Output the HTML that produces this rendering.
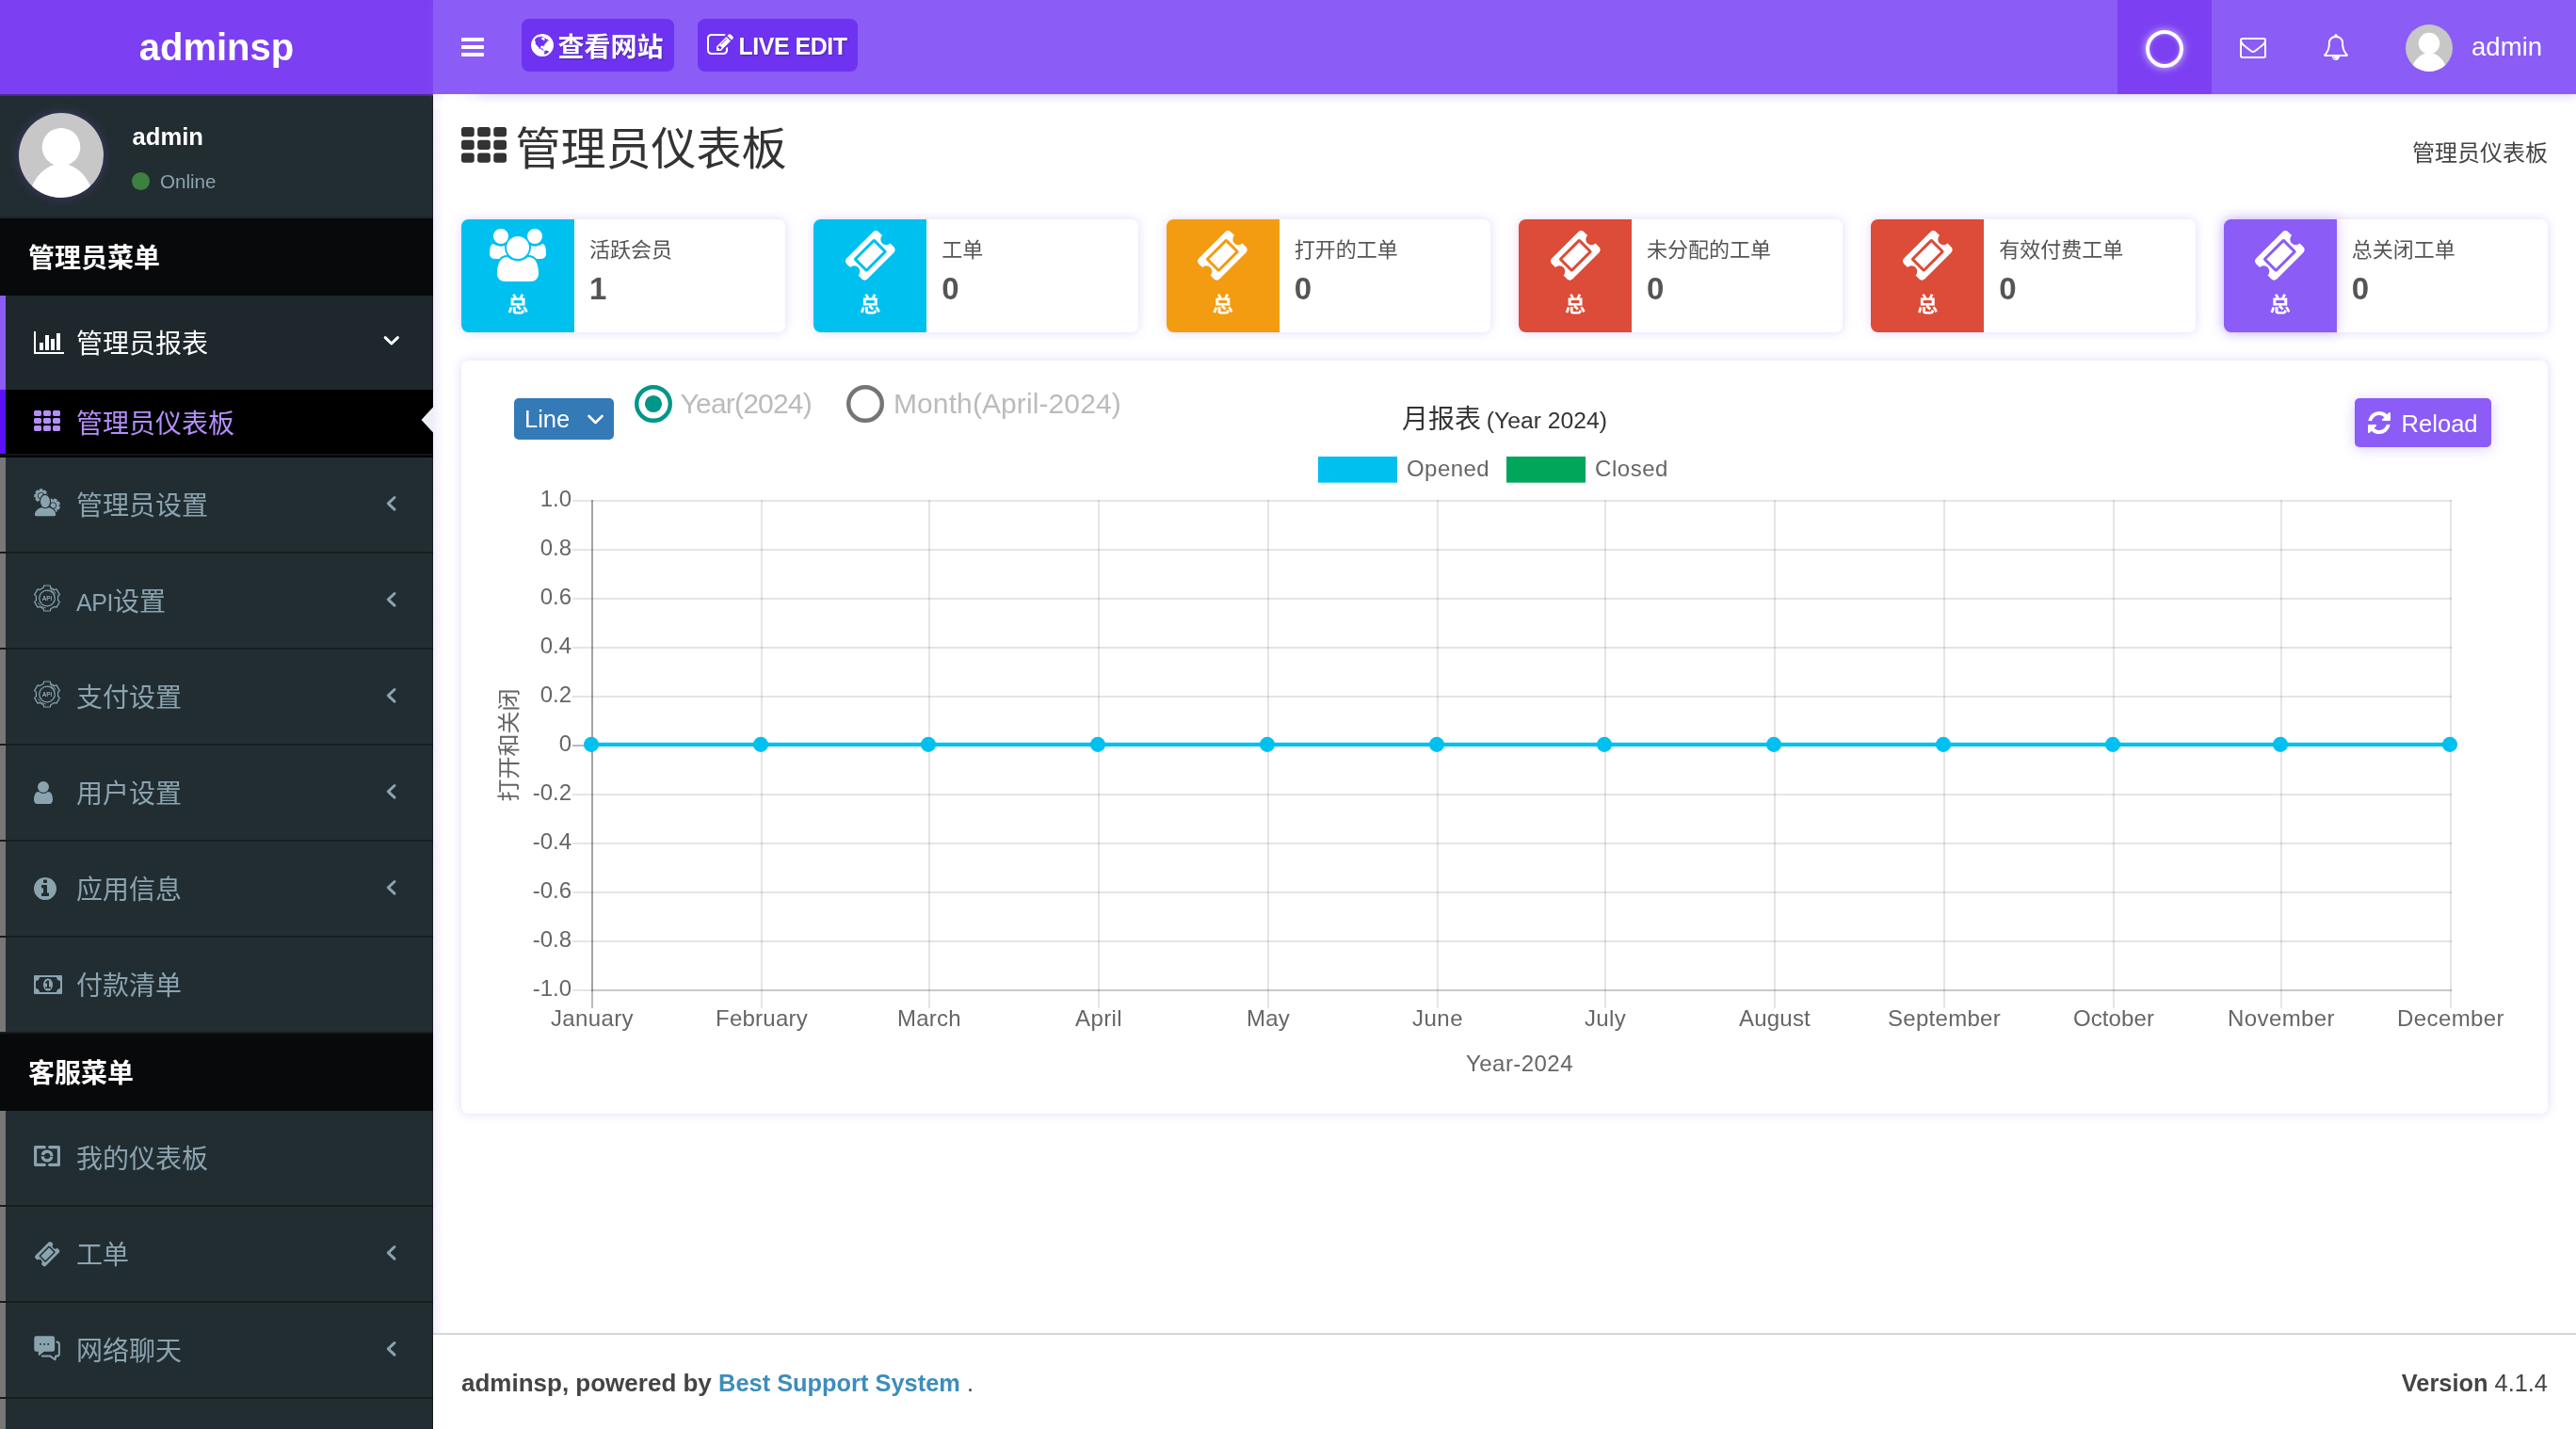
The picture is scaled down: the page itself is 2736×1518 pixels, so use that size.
<!DOCTYPE html>
<html lang="zh-CN">
<head>
<meta charset="utf-8">
<title>管理员仪表板 - adminsp</title>
<style>
*{box-sizing:border-box;margin:0;padding:0}
html,body{width:2736px;height:1518px;overflow:hidden;background:#fff}
body{position:relative;font-family:"Liberation Sans","Noto Sans CJK SC",sans-serif;color:#333;font-size:28px;line-height:40px}
#side,#hdr,#main{will-change:transform}
.ic{position:absolute;display:block;overflow:visible}
.abs{position:absolute;white-space:nowrap}
b,strong{font-weight:700}

/* ---------- sidebar ---------- */
#side{position:absolute;left:0;top:0;width:460px;height:1518px;background:#222d32;overflow:hidden}
#sedge{position:absolute;left:459px;top:102px;width:1px;height:1416px;background:rgba(0,0,0,.35)}
#logo{position:absolute;left:0;top:0;width:460px;height:100px;background:#7c40f2;color:#fff;text-align:center;
  font:700 40px/100px "Liberation Sans",sans-serif}
#logoshade{position:absolute;left:0;top:100px;width:460px;height:2px;background:#4a289c}
#upanel{position:absolute;left:0;top:100px;width:460px;height:132px;border-bottom:2px solid #1b2428}
.avatar{position:absolute;border-radius:50%;background:#c7c7c7;overflow:hidden}
.av1{box-shadow:0 0 12px rgba(139,92,246,.3)}
.uname{position:absolute;left:140.6px;top:130px;color:#fff;font-weight:700;font-size:25.6px;line-height:30px;white-space:nowrap}
.ustat{position:absolute;left:170px;top:181px;color:#8aa4af;font-size:20.6px;line-height:24px;white-space:nowrap}
.udot{position:absolute;left:140px;top:183px;width:19px;height:19px;border-radius:50%;background:#3e8040}
.mh{position:absolute;left:0;width:460px;height:82px;background:#08090b;color:#fff;font-weight:700;font-size:28px;line-height:82px;padding-left:30px;padding-top:2px;white-space:nowrap}
.mi{position:absolute;left:0;width:460px;height:102px;border-bottom:2px solid #161d21;color:#8aa4af;
  font-size:28px;line-height:100px;white-space:nowrap;background:linear-gradient(to right,#777 0,#777 6px,rgba(0,0,0,0) 6px)}
.mi .t{position:absolute;left:81px;top:2px}
.mi.act{background:linear-gradient(to right,#8b5cf6 0,#8b5cf6 6px,#1e282c 6px);color:#fff;height:100px;border-bottom:0}
.sub{position:absolute;left:0;top:414px;width:460px;height:68px;background:linear-gradient(to right,#5b10f5 0,#5b10f5 6px,#000 6px);color:#b48ef9;font-size:28px;line-height:70px;white-space:nowrap}
.sub .t{position:absolute;left:81px;top:2px}
.subline{position:absolute;left:0;top:482px;width:460px;height:4px;background:linear-gradient(to bottom,#101615 0,#101615 2px,#000 2px)}
.chev{position:absolute;display:block;overflow:visible}

/* ---------- header ---------- */
#hdr{z-index:5;position:absolute;left:460px;top:0;width:2276px;height:100px;background:#8b5cf6;box-shadow:0 2px 10px rgba(139,92,246,.3)}
.hbtn{position:absolute;top:20px;height:56px;border-radius:8px;background:#6e33f0;color:#fff;font-weight:700;font-size:28px;line-height:56px;white-space:nowrap;text-shadow:1px 1px 2px rgba(0,0,0,.3)}
#hsq{position:absolute;left:1789px;top:0;width:100px;height:100px;background:#7c40f2}
#hring{position:absolute;left:1819px;top:32px;width:40px;height:40px;border-radius:50%;border:4.5px solid #fff;box-shadow:0 0 8px rgba(255,255,255,.7), inset 0 0 4px rgba(255,255,255,.4)}
#hfade{position:absolute;left:0;top:100px;width:62px;height:16px;background:linear-gradient(to right,rgba(255,255,255,.42) 0,rgba(255,255,255,.55) 8px,rgba(255,255,255,.95) 16px,rgba(255,255,255,.75) 32px,rgba(255,255,255,0) 62px)}
.hname{position:absolute;left:2165px;top:30px;color:#fff;font-size:27.6px;line-height:40px;white-space:nowrap}

/* ---------- content ---------- */
#main{position:absolute;left:460px;top:100px;width:2276px;height:1418px;background:#fff;overflow:hidden}
#lshade{position:absolute;left:0;top:0;width:11px;height:1418px;background:linear-gradient(to right,rgba(139,92,246,.11),rgba(139,92,246,0))}
.ptitle{position:absolute;left:87.5px;top:22.5px;font-size:48px;line-height:72px;color:#333;white-space:nowrap}
.crumb{position:absolute;right:30px;top:42.5px;font-size:24px;line-height:40px;color:#444;white-space:nowrap}
.ibox{position:absolute;top:133px;width:344.4px;height:120px;border-radius:7.5px;background:#fff;box-shadow:0 0 12px rgba(139,92,246,.24)}
.ibox .ico{position:absolute;left:0;top:0;width:120px;height:120px;border-radius:7.5px 0 0 7.5px}
.ibox .ico.glow{box-shadow:0 0 14px rgba(139,92,246,.36)}
.ibox .tot{position:absolute;left:0;top:76px;width:120px;text-align:center;color:#fff;font-weight:700;font-size:22px;line-height:30px}
.ibox .lbl{position:absolute;left:136px;top:17px;font-size:22px;line-height:32px;color:#555;white-space:nowrap}
.ibox .num{position:absolute;left:136px;top:52px;font-size:33px;line-height:44px;color:#555;font-weight:700;white-space:nowrap}
#cbox{position:absolute;left:30px;top:283px;width:2216px;height:800px;border-radius:7.5px;background:#fff;box-shadow:0 0 12px rgba(139,92,246,.24)}
.sel{position:absolute;left:56px;top:40px;width:106px;height:44px;border-radius:5px;background:#337ab7;color:#fff;font-size:25.5px;line-height:44px;padding-left:11px;white-space:nowrap}
.radio{position:absolute;top:26px;width:40px;height:40px;border-radius:50%;border:4.5px solid #757575}
.radio.on{border-color:#009688}
.radio.on:after{content:"";position:absolute;left:6.5px;top:6.5px;width:18px;height:18px;border-radius:50%;background:#009688}
.rlab{position:absolute;top:26px;color:#bbb;font-size:30px;line-height:40px;white-space:nowrap}
.reload{position:absolute;left:2011px;top:40px;width:145px;height:52px;border-radius:5px;background:#8b5cf6;color:#fff;font-size:25.6px;line-height:52px;white-space:nowrap;box-shadow:0 2px 14px rgba(139,92,246,.3)}
.reload .t{position:absolute;left:49.5px;top:1px}
#chart{position:absolute;left:0;top:0}
#chart text{font-family:"Liberation Sans",sans-serif;font-size:24px;fill:#666}

/* ---------- footer ---------- */
#foot{position:absolute;left:0;top:1316px;width:2276px;height:102px;border-top:2px solid #d2d6de;background:#fff;color:#444;font-size:28px;line-height:40px}
#foot .l{position:absolute;left:30px;top:31px;white-space:nowrap;font-weight:700;font-size:25.4px}
#foot .l span{color:#3c8dbc}
#foot .r{position:absolute;right:30px;top:31px;white-space:nowrap;font-size:25.4px}

</style>
</head>
<body>
<div id="side">
<div id="logo">adminsp</div>
<div id="upanel"></div>
<div id="logoshade"></div>
<div class="avatar av1" style="left:20px;top:120px;width:90px;height:90px"><svg width="90" height="90" viewBox="0 0 90 90"><circle cx="45" cy="36.2" r="20.3" fill="#fff"/><ellipse cx="45" cy="102" rx="36" ry="48" fill="#fff"/></svg></div>
<div class="uname">admin</div>
<div class="udot"></div><div class="ustat">Online</div>
<div class="mh" style="top:232px">管理员菜单</div>
<div class="mi act" style="top:314px"><span class="t">管理员报表</span></div>
<svg class="ic" style="left:36.00px;top:352.20px;" width="32.00" height="24.00" viewBox="0 -1408 2048 1536"><path fill="#fff" transform="scale(1,-1)" d="M640 640v-512h-256v512h256zM1024 1152v-1024h-256v1024h256zM2048 0v-128h-2048v1536h128v-1408h1920zM1408 896v-768h-256v768h256zM1792 1280v-1152h-256v1152h256z"/></svg>
<svg class="chev" style="left:405px;top:352px" width="22" height="20" viewBox="0 0 22 20"><path d="M4.2 6.6 L10.8 13 L17.4 6.6" fill="none" stroke="#fff" stroke-width="3" stroke-linecap="round" stroke-linejoin="round"/></svg>
<div class="sub"><span class="t">管理员仪表板</span></div>
<svg class="ic" style="left:36.00px;top:436.20px;" width="28.00" height="22.00" viewBox="0 -1408 1792 1408"><path fill="#b48ef9" transform="scale(1,-1)" d="M512 288v-192q0 -40 -28 -68t-68 -28h-320q-40 0 -68 28t-28 68v192q0 40 28 68t68 28h320q40 0 68 -28t28 -68zM512 800v-192q0 -40 -28 -68t-68 -28h-320q-40 0 -68 28t-28 68v192q0 40 28 68t68 28h320q40 0 68 -28t28 -68zM1152 288v-192q0 -40 -28 -68t-68 -28h-320 q-40 0 -68 28t-28 68v192q0 40 28 68t68 28h320q40 0 68 -28t28 -68zM512 1312v-192q0 -40 -28 -68t-68 -28h-320q-40 0 -68 28t-28 68v192q0 40 28 68t68 28h320q40 0 68 -28t28 -68zM1152 800v-192q0 -40 -28 -68t-68 -28h-320q-40 0 -68 28t-28 68v192q0 40 28 68t68 28 h320q40 0 68 -28t28 -68zM1792 288v-192q0 -40 -28 -68t-68 -28h-320q-40 0 -68 28t-28 68v192q0 40 28 68t68 28h320q40 0 68 -28t28 -68zM1152 1312v-192q0 -40 -28 -68t-68 -28h-320q-40 0 -68 28t-28 68v192q0 40 28 68t68 28h320q40 0 68 -28t28 -68zM1792 800v-192 q0 -40 -28 -68t-68 -28h-320q-40 0 -68 28t-28 68v192q0 40 28 68t68 28h320q40 0 68 -28t28 -68zM1792 1312v-192q0 -40 -28 -68t-68 -28h-320q-40 0 -68 28t-28 68v192q0 40 28 68t68 28h320q40 0 68 -28t28 -68z"/></svg>
<svg class="chev" style="z-index:3;left:446px;top:431px" width="14" height="30" viewBox="0 0 14 30"><path d="M14 1.5 L1.5 15 L14 28.5Z" fill="#eceff5"/></svg>
<div class="subline"></div>
<div class="mi" style="top:486px"><span class="t">管理员设置</span></div>
<svg class="ic" style="left:36px;top:519.0px" width="28" height="30" viewBox="0 0 28 30"><path d="M8.96 12.62 L8.76 14.20 L6.44 14.20 L6.24 12.62 L5.02 12.11 L3.75 13.08 L2.12 11.45 L3.09 10.18 L2.58 8.96 L1.00 8.76 L1.00 6.44 L2.58 6.24 L3.09 5.02 L2.12 3.75 L3.75 2.12 L5.02 3.09 L6.24 2.58 L6.44 1.00 L8.76 1.00 L8.96 2.58 L10.18 3.09 L11.45 2.12 L13.08 3.75 L12.11 5.02 L12.62 6.24 L14.20 6.44 L14.20 8.76 L12.62 8.96 L12.11 10.18 L13.08 11.45 L11.45 13.08 L10.18 12.11Z" fill="#8aa4af" stroke="#8aa4af" stroke-width="1.3" stroke-linejoin="round"/><circle cx="7.6" cy="7.6" r="3.4" fill="none" stroke="#222d32" stroke-width=".9"/><path d="M25.76 18.69 L27.23 19.52 L26.31 21.76 L24.67 21.30 L23.70 22.27 L24.16 23.91 L21.92 24.83 L21.09 23.36 L19.71 23.36 L18.88 24.83 L16.64 23.91 L17.10 22.27 L16.13 21.30 L14.49 21.76 L13.57 19.52 L15.04 18.69 L15.04 17.31 L13.57 16.48 L14.49 14.24 L16.13 14.70 L17.10 13.73 L16.64 12.09 L18.88 11.17 L19.71 12.64 L21.09 12.64 L21.92 11.17 L24.16 12.09 L23.70 13.73 L24.67 14.70 L26.31 14.24 L27.23 16.48 L25.76 17.31Z" fill="#8aa4af" stroke="#8aa4af" stroke-width="1.3" stroke-linejoin="round"/><circle cx="20.4" cy="18" r="3.3" fill="none" stroke="#222d32" stroke-width=".9"/><path d="M0.9 27.6 C1.5 22.6 5.6 19.7 12 19.7 C18.4 19.7 22.6 22.6 23.2 27.6 Q23.3 29.3 21.6 29.3 H2.5 Q0.8 29.3 0.9 27.6 Z" fill="#8aa4af" stroke="#222d32" stroke-width="2.2" paint-order="stroke"/><ellipse cx="12" cy="13.6" rx="5.05" ry="6.65" fill="#8aa4af" stroke="#222d32" stroke-width="2.2" paint-order="stroke"/></svg>
<svg class="chev" style="left:408px;top:524.8px" width="16" height="20" viewBox="0 0 16 20"><path d="M11 3.5 L4.3 9.8 L11 16.1" fill="none" stroke="#8aa4af" stroke-width="3" stroke-linecap="round" stroke-linejoin="round"/></svg>
<div class="mi" style="top:588px"><span class="t"><span style="font-size:25px;letter-spacing:-.45px">API</span>设置</span></div>
<svg class="ic" style="left:36px;top:621.0px" width="28" height="29" viewBox="0 0 28 29"><path d="M17.84 3.34 L17.36 1.01 L10.64 1.01 L10.16 3.34 L6.26 5.59 L4.00 4.84 L0.64 10.67 L2.42 12.25 L2.42 16.75 L0.64 18.33 L4.00 24.16 L6.26 23.41 L10.16 25.66 L10.64 27.99 L17.36 27.99 L17.84 25.66 L21.74 23.41 L24.00 24.16 L27.36 18.33 L25.58 16.75 L25.58 12.25 L27.36 10.67 L24.00 4.84 L21.74 5.59Z" fill="none" stroke="#8aa4af" stroke-width="1.2" stroke-linejoin="round"/><circle cx="14" cy="14.5" r="8.3" fill="none" stroke="#8aa4af" stroke-width="1.2"/><path d="M4.6 19.2 A10.5 10.5 0 0 0 12.6 24.9 M23.4 9.8 A10.5 10.5 0 0 0 16.6 4.3 M21.9 10.6 A9.3 9.3 0 0 0 17.6 6" fill="none" stroke="#8aa4af" stroke-width=".9"/><text x="14" y="16.8" text-anchor="middle" font-family="Liberation Sans, sans-serif" font-weight="700" font-size="6.4" fill="#8aa4af">API</text></svg>
<svg class="chev" style="left:408px;top:626.8px" width="16" height="20" viewBox="0 0 16 20"><path d="M11 3.5 L4.3 9.8 L11 16.1" fill="none" stroke="#8aa4af" stroke-width="3" stroke-linecap="round" stroke-linejoin="round"/></svg>
<div class="mi" style="top:690px"><span class="t">支付设置</span></div>
<svg class="ic" style="left:36px;top:723.0px" width="28" height="29" viewBox="0 0 28 29"><path d="M17.84 3.34 L17.36 1.01 L10.64 1.01 L10.16 3.34 L6.26 5.59 L4.00 4.84 L0.64 10.67 L2.42 12.25 L2.42 16.75 L0.64 18.33 L4.00 24.16 L6.26 23.41 L10.16 25.66 L10.64 27.99 L17.36 27.99 L17.84 25.66 L21.74 23.41 L24.00 24.16 L27.36 18.33 L25.58 16.75 L25.58 12.25 L27.36 10.67 L24.00 4.84 L21.74 5.59Z" fill="none" stroke="#8aa4af" stroke-width="1.2" stroke-linejoin="round"/><circle cx="14" cy="14.5" r="8.3" fill="none" stroke="#8aa4af" stroke-width="1.2"/><path d="M4.6 19.2 A10.5 10.5 0 0 0 12.6 24.9 M23.4 9.8 A10.5 10.5 0 0 0 16.6 4.3 M21.9 10.6 A9.3 9.3 0 0 0 17.6 6" fill="none" stroke="#8aa4af" stroke-width=".9"/><text x="14" y="16.8" text-anchor="middle" font-family="Liberation Sans, sans-serif" font-weight="700" font-size="6.4" fill="#8aa4af">API</text></svg>
<svg class="chev" style="left:408px;top:728.8px" width="16" height="20" viewBox="0 0 16 20"><path d="M11 3.5 L4.3 9.8 L11 16.1" fill="none" stroke="#8aa4af" stroke-width="3" stroke-linecap="round" stroke-linejoin="round"/></svg>
<div class="mi" style="top:792px"><span class="t">用户设置</span></div>
<svg class="ic" style="left:36.00px;top:830.00px;" width="20.00" height="24.00" viewBox="0 -1408 1280 1536"><path fill="#8aa4af" transform="scale(1,-1)" d="M1280 137q0 -109 -62.5 -187t-150.5 -78h-854q-88 0 -150.5 78t-62.5 187q0 85 8.5 160.5t31.5 152t58.5 131t94 89t134.5 34.5q131 -128 313 -128t313 128q76 0 134.5 -34.5t94 -89t58.5 -131t31.5 -152t8.5 -160.5zM1024 1024q0 -159 -112.5 -271.5t-271.5 -112.5 t-271.5 112.5t-112.5 271.5t112.5 271.5t271.5 112.5t271.5 -112.5t112.5 -271.5z"/></svg>
<svg class="chev" style="left:408px;top:830.8px" width="16" height="20" viewBox="0 0 16 20"><path d="M11 3.5 L4.3 9.8 L11 16.1" fill="none" stroke="#8aa4af" stroke-width="3" stroke-linecap="round" stroke-linejoin="round"/></svg>
<div class="mi" style="top:894px"><span class="t">应用信息</span></div>
<svg class="ic" style="left:36.00px;top:932.00px;" width="24.00" height="24.00" viewBox="0 -1408 1536 1536"><path fill="#8aa4af" transform="scale(1,-1)" d="M1024 160v160q0 14 -9 23t-23 9h-96v512q0 14 -9 23t-23 9h-320q-14 0 -23 -9t-9 -23v-160q0 -14 9 -23t23 -9h96v-320h-96q-14 0 -23 -9t-9 -23v-160q0 -14 9 -23t23 -9h448q14 0 23 9t9 23zM896 1056v160q0 14 -9 23t-23 9h-192q-14 0 -23 -9t-9 -23v-160q0 -14 9 -23 t23 -9h192q14 0 23 9t9 23zM1536 640q0 -209 -103 -385.5t-279.5 -279.5t-385.5 -103t-385.5 103t-279.5 279.5t-103 385.5t103 385.5t279.5 279.5t385.5 103t385.5 -103t279.5 -279.5t103 -385.5z"/></svg>
<svg class="chev" style="left:408px;top:932.8px" width="16" height="20" viewBox="0 0 16 20"><path d="M11 3.5 L4.3 9.8 L11 16.1" fill="none" stroke="#8aa4af" stroke-width="3" stroke-linecap="round" stroke-linejoin="round"/></svg>
<div class="mi" style="top:996px"><span class="t">付款清单</span></div>
<svg class="ic" style="left:36.00px;top:1036.00px;" width="30.00" height="20.00" viewBox="0 -1280 1920 1280"><path fill="#8aa4af" transform="scale(1,-1)" d="M768 384h384v96h-128v448h-114l-148 -137l77 -80q42 37 55 57h2v-288h-128v-96zM1280 640q0 -70 -21 -142t-59.5 -134t-101.5 -101t-138 -39t-138 39t-101.5 101t-59.5 134t-21 142t21 142t59.5 134t101.5 101t138 39t138 -39t101.5 -101t59.5 -134t21 -142zM1792 384 v512q-106 0 -181 75t-75 181h-1152q0 -106 -75 -181t-181 -75v-512q106 0 181 -75t75 -181h1152q0 106 75 181t181 75zM1920 1216v-1152q0 -26 -19 -45t-45 -19h-1792q-26 0 -45 19t-19 45v1152q0 26 19 45t45 19h1792q26 0 45 -19t19 -45z"/></svg>
<div class="mh" style="top:1098px">客服菜单</div>
<div class="mi" style="top:1180px"><span class="t">我的仪表板</span></div>
<svg class="ic" style="left:36px;top:1217px" width="28" height="22" viewBox="0 0 28 22"><path d="M11.3 1.6 H1.6 V20.4 H11.3 M16.7 1.6 H26.4 V20.4 H16.7" fill="none" stroke="#8aa4af" stroke-width="3.1" stroke-linecap="round" stroke-linejoin="round"/><circle cx="14" cy="11" r="4.9" fill="none" stroke="#8aa4af" stroke-width="3.3" stroke-dasharray="13.9 1.49" stroke-dashoffset="-0.75"/></svg>
<div class="mi" style="top:1282px"><span class="t">工单</span></div>
<svg class="ic" style="left:36.50px;top:1318.90px;" width="26.33" height="26.33" viewBox="54 -1482 1685 1685"><path fill="#8aa4af" transform="scale(1,-1)" d="M1024 1084l316 -316l-572 -572l-316 316zM813 105l618 618q19 19 19 45t-19 45l-362 362q-18 18 -45 18t-45 -18l-618 -618q-19 -19 -19 -45t19 -45l362 -362q18 -18 45 -18t45 18zM1702 742l-907 -908q-37 -37 -90.5 -37t-90.5 37l-126 126q56 56 56 136t-56 136 t-136 56t-136 -56l-125 126q-37 37 -37 90.5t37 90.5l907 906q37 37 90.5 37t90.5 -37l125 -125q-56 -56 -56 -136t56 -136t136 -56t136 56l126 -125q37 -37 37 -90.5t-37 -90.5z"/></svg>
<svg class="chev" style="left:408px;top:1320.8px" width="16" height="20" viewBox="0 0 16 20"><path d="M11 3.5 L4.3 9.8 L11 16.1" fill="none" stroke="#8aa4af" stroke-width="3" stroke-linecap="round" stroke-linejoin="round"/></svg>
<div class="mi" style="top:1384px"><span class="t">网络聊天</span></div>
<svg class="ic" style="left:36px;top:1418.6px" width="29" height="28" viewBox="0 0 29 28"><path d="M2.7 0.3 H19.7 Q22.1 0.3 22.1 2.7 V14.4 Q22.1 16.8 19.7 16.8 H10.8 L5.6 21 Q4.8 21.4 4.8 20.4 V16.8 H2.7 Q0.3 16.8 0.3 14.4 V2.7 Q0.3 0.3 2.7 0.3Z" fill="#8aa4af"/><rect x="6.1" y="8" width="1.8" height="1.8" rx=".4" fill="#222d32"/><rect x="10.2" y="8" width="1.8" height="1.8" rx=".4" fill="#222d32"/><rect x="14.3" y="8" width="1.8" height="1.8" rx=".4" fill="#222d32"/><path d="M24.2 6.6 Q26.9 6.6 26.9 9.3 V18.9 Q26.9 21.6 24.2 21.6 H23.2 L22.5 25.3 L17.3 21.6 H8.8" fill="none" stroke="#8aa4af" stroke-width="2" stroke-linejoin="round" stroke-linecap="round"/></svg>
<svg class="chev" style="left:408px;top:1422.8px" width="16" height="20" viewBox="0 0 16 20"><path d="M11 3.5 L4.3 9.8 L11 16.1" fill="none" stroke="#8aa4af" stroke-width="3" stroke-linecap="round" stroke-linejoin="round"/></svg>
<div class="mi" style="top:1486px"><span class="t"></span></div>
<div id="sedge"></div>
</div>
<div id="hdr">
<div id="hfade"></div>
<svg class="ic" style="left:30.00px;top:40.00px;" width="24.00" height="20.00" viewBox="0 -1280 1536 1280"><path fill="#fff" transform="scale(1,-1)" d="M1536 192v-128q0 -26 -19 -45t-45 -19h-1408q-26 0 -45 19t-19 45v128q0 26 19 45t45 19h1408q26 0 45 -19t19 -45zM1536 704v-128q0 -26 -19 -45t-45 -19h-1408q-26 0 -45 19t-19 45v128q0 26 19 45t45 19h1408q26 0 45 -19t19 -45zM1536 1216v-128q0 -26 -19 -45 t-45 -19h-1408q-26 0 -45 19t-19 45v128q0 26 19 45t45 19h1408q26 0 45 -19t19 -45z"/></svg>
<div class="hbtn" style="left:94px;width:162px"><span class="abs" style="left:38.5px;top:3px">查看网站</span></div>
<div class="hbtn" style="left:281px;width:170px"><span class="abs" style="left:43.5px;top:.5px;font-size:25px;letter-spacing:-.5px">LIVE EDIT</span></div>
<svg class="ic" style="left:104.00px;top:35.70px;" width="24.00" height="24.00" viewBox="0 -1408 1536 1536"><path fill="#fff" transform="scale(1,-1)" d="M768 1408q209 0 385.5 -103t279.5 -279.5t103 -385.5t-103 -385.5t-279.5 -279.5t-385.5 -103t-385.5 103t-279.5 279.5t-103 385.5t103 385.5t279.5 279.5t385.5 103zM1042 887q-2 -1 -9.5 -9.5t-13.5 -9.5q2 0 4.5 5t5 11t3.5 7q6 7 22 15q14 6 52 12q34 8 51 -11 q-2 2 9.5 13t14.5 12q3 2 15 4.5t15 7.5l2 22q-12 -1 -17.5 7t-6.5 21q0 -2 -6 -8q0 7 -4.5 8t-11.5 -1t-9 -1q-10 3 -15 7.5t-8 16.5t-4 15q-2 5 -9.5 11t-9.5 10q-1 2 -2.5 5.5t-3 6.5t-4 5.5t-5.5 2.5t-7 -5t-7.5 -10t-4.5 -5q-3 2 -6 1.5t-4.5 -1t-4.5 -3t-5 -3.5 q-3 -2 -8.5 -3t-8.5 -2q15 5 -1 11q-10 4 -16 3q9 4 7.5 12t-8.5 14h5q-1 4 -8.5 8.5t-17.5 8.5t-13 6q-8 5 -34 9.5t-33 0.5q-5 -6 -4.5 -10.5t4 -14t3.5 -12.5q1 -6 -5.5 -13t-6.5 -12q0 -7 14 -15.5t10 -21.5q-3 -8 -16 -16t-16 -12q-5 -8 -1.5 -18.5t10.5 -16.5 q2 -2 1.5 -4t-3.5 -4.5t-5.5 -4t-6.5 -3.5l-3 -2q-11 -5 -20.5 6t-13.5 26q-7 25 -16 30q-23 8 -29 -1q-5 13 -41 26q-25 9 -58 4q6 1 0 15q-7 15 -19 12q3 6 4 17.5t1 13.5q3 13 12 23q1 1 7 8.5t9.5 13.5t0.5 6q35 -4 50 11q5 5 11.5 17t10.5 17q9 6 14 5.5t14.5 -5.5 t14.5 -5q14 -1 15.5 11t-7.5 20q12 -1 3 17q-4 7 -8 9q-12 4 -27 -5q-8 -4 2 -8q-1 1 -9.5 -10.5t-16.5 -17.5t-16 5q-1 1 -5.5 13.5t-9.5 13.5q-8 0 -16 -15q3 8 -11 15t-24 8q19 12 -8 27q-7 4 -20.5 5t-19.5 -4q-5 -7 -5.5 -11.5t5 -8t10.5 -5.5t11.5 -4t8.5 -3 q14 -10 8 -14q-2 -1 -8.5 -3.5t-11.5 -4.5t-6 -4q-3 -4 0 -14t-2 -14q-5 5 -9 17.5t-7 16.5q7 -9 -25 -6l-10 1q-4 0 -16 -2t-20.5 -1t-13.5 8q-4 8 0 20q1 4 4 2q-4 3 -11 9.5t-10 8.5q-46 -15 -94 -41q6 -1 12 1q5 2 13 6.5t10 5.5q34 14 42 7l5 5q14 -16 20 -25 q-7 4 -30 1q-20 -6 -22 -12q7 -12 5 -18q-4 3 -11.5 10t-14.5 11t-15 5q-16 0 -22 -1q-146 -80 -235 -222q7 -7 12 -8q4 -1 5 -9t2.5 -11t11.5 3q9 -8 3 -19q1 1 44 -27q19 -17 21 -21q3 -11 -10 -18q-1 2 -9 9t-9 4q-3 -5 0.5 -18.5t10.5 -12.5q-7 0 -9.5 -16t-2.5 -35.5 t-1 -23.5l2 -1q-3 -12 5.5 -34.5t21.5 -19.5q-13 -3 20 -43q6 -8 8 -9q3 -2 12 -7.5t15 -10t10 -10.5q4 -5 10 -22.5t14 -23.5q-2 -6 9.5 -20t10.5 -23q-1 0 -2.5 -1t-2.5 -1q3 -7 15.5 -14t15.5 -13q1 -3 2 -10t3 -11t8 -2q2 20 -24 62q-15 25 -17 29q-3 5 -5.5 15.5 t-4.5 14.5q2 0 6 -1.5t8.5 -3.5t7.5 -4t2 -3q-3 -7 2 -17.5t12 -18.5t17 -19t12 -13q6 -6 14 -19.5t0 -13.5q9 0 20 -10.5t17 -19.5q5 -8 8 -26t5 -24q2 -7 8.5 -13.5t12.5 -9.5l16 -8t13 -7q5 -2 18.5 -10.5t21.5 -11.5q10 -4 16 -4t14.5 2.5t13.5 3.5q15 2 29 -15t21 -21 q36 -19 55 -11q-2 -1 0.5 -7.5t8 -15.5t9 -14.5t5.5 -8.5q5 -6 18 -15t18 -15q6 4 7 9q-3 -8 7 -20t18 -10q14 3 14 32q-31 -15 -49 18q0 1 -2.5 5.5t-4 8.5t-2.5 8.5t0 7.5t5 3q9 0 10 3.5t-2 12.5t-4 13q-1 8 -11 20t-12 15q-5 -9 -16 -8t-16 9q0 -1 -1.5 -5.5t-1.5 -6.5 q-13 0 -15 1q1 3 2.5 17.5t3.5 22.5q1 4 5.5 12t7.5 14.5t4 12.5t-4.5 9.5t-17.5 2.5q-19 -1 -26 -20q-1 -3 -3 -10.5t-5 -11.5t-9 -7q-7 -3 -24 -2t-24 5q-13 8 -22.5 29t-9.5 37q0 10 2.5 26.5t3 25t-5.5 24.5q3 2 9 9.5t10 10.5q2 1 4.5 1.5t4.5 0t4 1.5t3 6q-1 1 -4 3 q-3 3 -4 3q7 -3 28.5 1.5t27.5 -1.5q15 -11 22 2q0 1 -2.5 9.5t-0.5 13.5q5 -27 29 -9q3 -3 15.5 -5t17.5 -5q3 -2 7 -5.5t5.5 -4.5t5 0.5t8.5 6.5q10 -14 12 -24q11 -40 19 -44q7 -3 11 -2t4.5 9.5t0 14t-1.5 12.5l-1 8v18l-1 8q-15 3 -18.5 12t1.5 18.5t15 18.5q1 1 8 3.5 t15.5 6.5t12.5 8q21 19 15 35q7 0 11 9q-1 0 -5 3t-7.5 5t-4.5 2q9 5 2 16q5 3 7.5 11t7.5 10q9 -12 21 -2q8 8 1 16q5 7 20.5 10.5t18.5 9.5q7 -2 8 2t1 12t3 12q4 5 15 9t13 5l17 11q3 4 0 4q18 -2 31 11q10 11 -6 20q3 6 -3 9.5t-15 5.5q3 1 11.5 0.5t10.5 1.5 q15 10 -7 16q-17 5 -43 -12zM879 10q206 36 351 189q-3 3 -12.5 4.5t-12.5 3.5q-18 7 -24 8q1 7 -2.5 13t-8 9t-12.5 8t-11 7q-2 2 -7 6t-7 5.5t-7.5 4.5t-8.5 2t-10 -1l-3 -1q-3 -1 -5.5 -2.5t-5.5 -3t-4 -3t0 -2.5q-21 17 -36 22q-5 1 -11 5.5t-10.5 7t-10 1.5t-11.5 -7 q-5 -5 -6 -15t-2 -13q-7 5 0 17.5t2 18.5q-3 6 -10.5 4.5t-12 -4.5t-11.5 -8.5t-9 -6.5t-8.5 -5.5t-8.5 -7.5q-3 -4 -6 -12t-5 -11q-2 4 -11.5 6.5t-9.5 5.5q2 -10 4 -35t5 -38q7 -31 -12 -48q-27 -25 -29 -40q-4 -22 12 -26q0 -7 -8 -20.5t-7 -21.5q0 -6 2 -16z"/></svg>
<svg class="ic" style="left:290.60px;top:35.70px;" width="27.88" height="22.00" viewBox="0 -1408 1784 1408"><path fill="#fff" transform="scale(1,-1)" d="M888 352l116 116l-152 152l-116 -116v-56h96v-96h56zM1328 1072q-16 16 -33 -1l-350 -350q-17 -17 -1 -33t33 1l350 350q17 17 1 33zM1408 478v-190q0 -119 -84.5 -203.5t-203.5 -84.5h-832q-119 0 -203.5 84.5t-84.5 203.5v832q0 119 84.5 203.5t203.5 84.5h832 q63 0 117 -25q15 -7 18 -23q3 -17 -9 -29l-49 -49q-14 -14 -32 -8q-23 6 -45 6h-832q-66 0 -113 -47t-47 -113v-832q0 -66 47 -113t113 -47h832q66 0 113 47t47 113v126q0 13 9 22l64 64q15 15 35 7t20 -29zM1312 1216l288 -288l-672 -672h-288v288zM1756 1084l-92 -92 l-288 288l92 92q28 28 68 28t68 -28l152 -152q28 -28 28 -68t-28 -68z"/></svg>
<div id="hsq"></div><div id="hring"></div>
<svg class="ic" style="left:1919.00px;top:40.00px;" width="28.00" height="22.00" viewBox="0 -1280 1792 1408"><path fill="#fff" transform="scale(1,-1)" d="M1664 32v768q-32 -36 -69 -66q-268 -206 -426 -338q-51 -43 -83 -67t-86.5 -48.5t-102.5 -24.5h-1h-1q-48 0 -102.5 24.5t-86.5 48.5t-83 67q-158 132 -426 338q-37 30 -69 66v-768q0 -13 9.5 -22.5t22.5 -9.5h1472q13 0 22.5 9.5t9.5 22.5zM1664 1083v11v13.5t-0.5 13 t-3 12.5t-5.5 9t-9 7.5t-14 2.5h-1472q-13 0 -22.5 -9.5t-9.5 -22.5q0 -168 147 -284q193 -152 401 -317q6 -5 35 -29.5t46 -37.5t44.5 -31.5t50.5 -27.5t43 -9h1h1q20 0 43 9t50.5 27.5t44.5 31.5t46 37.5t35 29.5q208 165 401 317q54 43 100.5 115.5t46.5 131.5z M1792 1120v-1088q0 -66 -47 -113t-113 -47h-1472q-66 0 -113 47t-47 113v1088q0 66 47 113t113 47h1472q66 0 113 -47t47 -113z"/></svg>
<svg class="ic" style="left:2008.00px;top:36.00px;" width="26.00" height="28.00" viewBox="64 -1536 1664 1792"><path fill="#fff" transform="scale(1,-1)" d="M912 -160q0 16 -16 16q-59 0 -101.5 42.5t-42.5 101.5q0 16 -16 16t-16 -16q0 -73 51.5 -124.5t124.5 -51.5q16 0 16 16zM246 128h1300q-266 300 -266 832q0 51 -24 105t-69 103t-121.5 80.5t-169.5 31.5t-169.5 -31.5t-121.5 -80.5t-69 -103t-24 -105q0 -532 -266 -832z M1728 128q0 -52 -38 -90t-90 -38h-448q0 -106 -75 -181t-181 -75t-181 75t-75 181h-448q-52 0 -90 38t-38 90q50 42 91 88t85 119.5t74.5 158.5t50 206t19.5 260q0 152 117 282.5t307 158.5q-8 19 -8 39q0 40 28 68t68 28t68 -28t28 -68q0 -20 -8 -39q190 -28 307 -158.5 t117 -282.5q0 -139 19.5 -260t50 -206t74.5 -158.5t85 -119.5t91 -88z"/></svg>
<div class="avatar av2" style="left:2095px;top:26px;width:50px;height:50px"><svg width="50" height="50" viewBox="0 0 90 90"><circle cx="45" cy="36.2" r="20.3" fill="#fff"/><ellipse cx="45" cy="102" rx="36" ry="48" fill="#fff"/></svg></div>
<div class="hname">admin</div>
</div>
<div id="main">
<div id="lshade"></div>
<svg class="ic" style="left:30.00px;top:35.30px;" width="48.00" height="37.71" viewBox="0 -1408 1792 1408"><path fill="#333" transform="scale(1,-1)" d="M512 288v-192q0 -40 -28 -68t-68 -28h-320q-40 0 -68 28t-28 68v192q0 40 28 68t68 28h320q40 0 68 -28t28 -68zM512 800v-192q0 -40 -28 -68t-68 -28h-320q-40 0 -68 28t-28 68v192q0 40 28 68t68 28h320q40 0 68 -28t28 -68zM1152 288v-192q0 -40 -28 -68t-68 -28h-320 q-40 0 -68 28t-28 68v192q0 40 28 68t68 28h320q40 0 68 -28t28 -68zM512 1312v-192q0 -40 -28 -68t-68 -28h-320q-40 0 -68 28t-28 68v192q0 40 28 68t68 28h320q40 0 68 -28t28 -68zM1152 800v-192q0 -40 -28 -68t-68 -28h-320q-40 0 -68 28t-28 68v192q0 40 28 68t68 28 h320q40 0 68 -28t28 -68zM1792 288v-192q0 -40 -28 -68t-68 -28h-320q-40 0 -68 28t-28 68v192q0 40 28 68t68 28h320q40 0 68 -28t28 -68zM1152 1312v-192q0 -40 -28 -68t-68 -28h-320q-40 0 -68 28t-28 68v192q0 40 28 68t68 28h320q40 0 68 -28t28 -68zM1792 800v-192 q0 -40 -28 -68t-68 -28h-320q-40 0 -68 28t-28 68v192q0 40 28 68t68 28h320q40 0 68 -28t28 -68zM1792 1312v-192q0 -40 -28 -68t-68 -28h-320q-40 0 -68 28t-28 68v192q0 40 28 68t68 28h320q40 0 68 -28t28 -68z"/></svg>
<div class="ptitle">管理员仪表板</div>
<div class="crumb">管理员仪表板</div>
<div class="ibox" style="left:30.00px"><div class="ico" style="background:#00c0ef"></div>
<svg class="ic" style="left:30.00px;top:10.00px;" width="60.00" height="56.00" viewBox="0 -1536 1920 1792"><path fill="#fff" transform="scale(1,-1)" d="M593 640q-162 -5 -265 -128h-134q-82 0 -138 40.5t-56 118.5q0 353 124 353q6 0 43.5 -21t97.5 -42.5t119 -21.5q67 0 133 23q-5 -37 -5 -66q0 -139 81 -256zM1664 3q0 -120 -73 -189.5t-194 -69.5h-874q-121 0 -194 69.5t-73 189.5q0 53 3.5 103.5t14 109t26.5 108.5 t43 97.5t62 81t85.5 53.5t111.5 20q10 0 43 -21.5t73 -48t107 -48t135 -21.5t135 21.5t107 48t73 48t43 21.5q61 0 111.5 -20t85.5 -53.5t62 -81t43 -97.5t26.5 -108.5t14 -109t3.5 -103.5zM640 1280q0 -106 -75 -181t-181 -75t-181 75t-75 181t75 181t181 75t181 -75 t75 -181zM1344 896q0 -159 -112.5 -271.5t-271.5 -112.5t-271.5 112.5t-112.5 271.5t112.5 271.5t271.5 112.5t271.5 -112.5t112.5 -271.5zM1920 671q0 -78 -56 -118.5t-138 -40.5h-134q-103 123 -265 128q81 117 81 256q0 29 -5 66q66 -23 133 -23q59 0 119 21.5t97.5 42.5 t43.5 21q124 0 124 -353zM1792 1280q0 -106 -75 -181t-181 -75t-181 75t-75 181t75 181t181 75t181 -75t75 -181z"/></svg>
<div class="tot">总</div><div class="lbl">活跃会员</div><div class="num">1</div></div>
<div class="ibox" style="left:404.33px"><div class="ico" style="background:#00c0ef"></div>
<svg class="ic" style="left:33.70px;top:11.70px;" width="52.66" height="52.66" viewBox="54 -1482 1685 1685"><path fill="#fff" transform="scale(1,-1)" d="M1024 1084l316 -316l-572 -572l-316 316zM813 105l618 618q19 19 19 45t-19 45l-362 362q-18 18 -45 18t-45 -18l-618 -618q-19 -19 -19 -45t19 -45l362 -362q18 -18 45 -18t45 18zM1702 742l-907 -908q-37 -37 -90.5 -37t-90.5 37l-126 126q56 56 56 136t-56 136 t-136 56t-136 -56l-125 126q-37 37 -37 90.5t37 90.5l907 906q37 37 90.5 37t90.5 -37l125 -125q-56 -56 -56 -136t56 -136t136 -56t136 56l126 -125q37 -37 37 -90.5t-37 -90.5z"/></svg>
<div class="tot">总</div><div class="lbl">工单</div><div class="num">0</div></div>
<div class="ibox" style="left:778.66px"><div class="ico" style="background:#f39c12"></div>
<svg class="ic" style="left:33.70px;top:11.70px;" width="52.66" height="52.66" viewBox="54 -1482 1685 1685"><path fill="#fff" transform="scale(1,-1)" d="M1024 1084l316 -316l-572 -572l-316 316zM813 105l618 618q19 19 19 45t-19 45l-362 362q-18 18 -45 18t-45 -18l-618 -618q-19 -19 -19 -45t19 -45l362 -362q18 -18 45 -18t45 18zM1702 742l-907 -908q-37 -37 -90.5 -37t-90.5 37l-126 126q56 56 56 136t-56 136 t-136 56t-136 -56l-125 126q-37 37 -37 90.5t37 90.5l907 906q37 37 90.5 37t90.5 -37l125 -125q-56 -56 -56 -136t56 -136t136 -56t136 56l126 -125q37 -37 37 -90.5t-37 -90.5z"/></svg>
<div class="tot">总</div><div class="lbl">打开的工单</div><div class="num">0</div></div>
<div class="ibox" style="left:1152.99px"><div class="ico" style="background:#dd4b39"></div>
<svg class="ic" style="left:33.70px;top:11.70px;" width="52.66" height="52.66" viewBox="54 -1482 1685 1685"><path fill="#fff" transform="scale(1,-1)" d="M1024 1084l316 -316l-572 -572l-316 316zM813 105l618 618q19 19 19 45t-19 45l-362 362q-18 18 -45 18t-45 -18l-618 -618q-19 -19 -19 -45t19 -45l362 -362q18 -18 45 -18t45 18zM1702 742l-907 -908q-37 -37 -90.5 -37t-90.5 37l-126 126q56 56 56 136t-56 136 t-136 56t-136 -56l-125 126q-37 37 -37 90.5t37 90.5l907 906q37 37 90.5 37t90.5 -37l125 -125q-56 -56 -56 -136t56 -136t136 -56t136 56l126 -125q37 -37 37 -90.5t-37 -90.5z"/></svg>
<div class="tot">总</div><div class="lbl">未分配的工单</div><div class="num">0</div></div>
<div class="ibox" style="left:1527.32px"><div class="ico" style="background:#dd4b39"></div>
<svg class="ic" style="left:33.70px;top:11.70px;" width="52.66" height="52.66" viewBox="54 -1482 1685 1685"><path fill="#fff" transform="scale(1,-1)" d="M1024 1084l316 -316l-572 -572l-316 316zM813 105l618 618q19 19 19 45t-19 45l-362 362q-18 18 -45 18t-45 -18l-618 -618q-19 -19 -19 -45t19 -45l362 -362q18 -18 45 -18t45 18zM1702 742l-907 -908q-37 -37 -90.5 -37t-90.5 37l-126 126q56 56 56 136t-56 136 t-136 56t-136 -56l-125 126q-37 37 -37 90.5t37 90.5l907 906q37 37 90.5 37t90.5 -37l125 -125q-56 -56 -56 -136t56 -136t136 -56t136 56l126 -125q37 -37 37 -90.5t-37 -90.5z"/></svg>
<div class="tot">总</div><div class="lbl">有效付费工单</div><div class="num">0</div></div>
<div class="ibox" style="left:1901.65px"><div class="ico glow" style="background:#8b5cf6"></div>
<svg class="ic" style="left:33.70px;top:11.70px;" width="52.66" height="52.66" viewBox="54 -1482 1685 1685"><path fill="#fff" transform="scale(1,-1)" d="M1024 1084l316 -316l-572 -572l-316 316zM813 105l618 618q19 19 19 45t-19 45l-362 362q-18 18 -45 18t-45 -18l-618 -618q-19 -19 -19 -45t19 -45l362 -362q18 -18 45 -18t45 18zM1702 742l-907 -908q-37 -37 -90.5 -37t-90.5 37l-126 126q56 56 56 136t-56 136 t-136 56t-136 -56l-125 126q-37 37 -37 90.5t37 90.5l907 906q37 37 90.5 37t90.5 -37l125 -125q-56 -56 -56 -136t56 -136t136 -56t136 56l126 -125q37 -37 37 -90.5t-37 -90.5z"/></svg>
<div class="tot">总</div><div class="lbl">总关闭工单</div><div class="num">0</div></div>
<div id="cbox">
<svg id="chart" width="2216" height="800" viewBox="0 0 2216 800">
<rect x="910" y="102" width="84" height="27.7" fill="#00c0ef"/><rect x="1110" y="102" width="84" height="27.7" fill="#00a65a"/>
<text x="1004" y="122.5" style="letter-spacing:0.43px">Opened</text><text x="1204" y="122.5" style="letter-spacing:0.55px">Closed</text>
<rect x="118" y="148" width="1996" height="2" fill="rgba(0,0,0,.1)"/><rect x="118" y="200" width="1996" height="2" fill="rgba(0,0,0,.1)"/><rect x="118" y="252" width="1996" height="2" fill="rgba(0,0,0,.1)"/><rect x="118" y="304" width="1996" height="2" fill="rgba(0,0,0,.1)"/><rect x="118" y="356" width="1996" height="2" fill="rgba(0,0,0,.1)"/><rect x="118" y="408" width="1996" height="2" fill="rgba(0,0,0,.27)"/><rect x="118" y="460" width="1996" height="2" fill="rgba(0,0,0,.1)"/><rect x="118" y="512" width="1996" height="2" fill="rgba(0,0,0,.1)"/><rect x="118" y="564" width="1996" height="2" fill="rgba(0,0,0,.1)"/><rect x="118" y="616" width="1996" height="2" fill="rgba(0,0,0,.1)"/><rect x="118" y="668" width="20" height="2" fill="rgba(0,0,0,.1)"/><rect x="138" y="668" width="1976" height="2" fill="rgba(0,0,0,.21)"/><rect x="138" y="148" width="2" height="522" fill="rgba(0,0,0,.36)"/><rect x="138" y="670" width="2" height="18" fill="rgba(0,0,0,.27)"/><rect x="318" y="148" width="2" height="540" fill="rgba(0,0,0,.1)"/><rect x="496" y="148" width="2" height="540" fill="rgba(0,0,0,.1)"/><rect x="676" y="148" width="2" height="540" fill="rgba(0,0,0,.1)"/><rect x="856" y="148" width="2" height="540" fill="rgba(0,0,0,.1)"/><rect x="1036" y="148" width="2" height="540" fill="rgba(0,0,0,.1)"/><rect x="1214" y="148" width="2" height="540" fill="rgba(0,0,0,.1)"/><rect x="1394" y="148" width="2" height="540" fill="rgba(0,0,0,.1)"/><rect x="1574" y="148" width="2" height="540" fill="rgba(0,0,0,.1)"/><rect x="1754" y="148" width="2" height="540" fill="rgba(0,0,0,.1)"/><rect x="1932" y="148" width="2" height="540" fill="rgba(0,0,0,.1)"/><rect x="2112" y="148" width="2" height="540" fill="rgba(0,0,0,.1)"/>
<g text-anchor="end"><text x="117" y="154.7">1.0</text><text x="117" y="206.7">0.8</text><text x="117" y="258.7">0.6</text><text x="117" y="310.7">0.4</text><text x="117" y="362.7">0.2</text><text x="117" y="414.7">0</text><text x="117" y="466.7">-0.2</text><text x="117" y="518.7">-0.4</text><text x="117" y="570.7">-0.6</text><text x="117" y="622.7">-0.8</text><text x="117" y="674.7">-1.0</text></g>
<g text-anchor="middle"><text x="139" y="706.8" style="letter-spacing:0.37px">January</text><text x="319" y="706.8" style="letter-spacing:0.25px">February</text><text x="497" y="706.8" style="letter-spacing:0.26px">March</text><text x="677" y="706.8" style="letter-spacing:0.40px">April</text><text x="857" y="706.8" style="letter-spacing:0.22px">May</text><text x="1037" y="706.8" style="letter-spacing:0.49px">June</text><text x="1215" y="706.8" style="letter-spacing:0.33px">July</text><text x="1395" y="706.8" style="letter-spacing:0.21px">August</text><text x="1575" y="706.8" style="letter-spacing:0.29px">September</text><text x="1755" y="706.8" style="letter-spacing:0.09px">October</text><text x="1933" y="706.8" style="letter-spacing:0.41px">November</text><text x="2113" y="706.8" style="letter-spacing:0.41px">December</text><text x="1124" y="754.7" style="letter-spacing:0.44px">Year-2024</text></g>
<text transform="translate(58.5,408.5) rotate(-90)" text-anchor="middle" style="font-family:'Liberation Sans','Noto Sans CJK SC',sans-serif">打开和关闭</text>
<rect x="138" y="405.8" width="1974" height="4.2" fill="#00c0ef"/>
<circle cx="138" cy="407.9" r="8.05" fill="#00c0ef"/><circle cx="318" cy="407.9" r="8.05" fill="#00c0ef"/><circle cx="496" cy="407.9" r="8.05" fill="#00c0ef"/><circle cx="676" cy="407.9" r="8.05" fill="#00c0ef"/><circle cx="856" cy="407.9" r="8.05" fill="#00c0ef"/><circle cx="1036" cy="407.9" r="8.05" fill="#00c0ef"/><circle cx="1214" cy="407.9" r="8.05" fill="#00c0ef"/><circle cx="1394" cy="407.9" r="8.05" fill="#00c0ef"/><circle cx="1574" cy="407.9" r="8.05" fill="#00c0ef"/><circle cx="1754" cy="407.9" r="8.05" fill="#00c0ef"/><circle cx="1932" cy="407.9" r="8.05" fill="#00c0ef"/><circle cx="2112" cy="407.9" r="8.05" fill="#00c0ef"/>
</svg>
<div class="sel">Line<svg class="chev" style="left:76px;top:14px" width="22" height="18" viewBox="0 0 22 18"><path d="M3.5 5 L10.5 12 L17.5 5" fill="none" stroke="#fff" stroke-width="2.6" stroke-linecap="round" stroke-linejoin="round"/></svg></div>
<svg class="ic" style="left:184px;top:26px" width="40" height="40" viewBox="0 0 40 40"><circle cx="20" cy="20" r="17.8" fill="none" stroke="#009688" stroke-width="4.4"/><circle cx="20" cy="20" r="9.1" fill="#009688"/></svg><div class="rlab" style="left:232.6px;letter-spacing:-.8px">Year(2024)</div>
<svg class="ic" style="left:409px;top:26px" width="40" height="40" viewBox="0 0 40 40"><circle cx="20" cy="20" r="17.8" fill="none" stroke="#757575" stroke-width="4.4"/></svg><div class="rlab" style="left:459px;letter-spacing:.1px">Month(April-2024)</div>
<div class="abs" style="left:0;width:2216px;top:43px;text-align:center;font-size:28px;line-height:40px;color:#333"><span style="word-spacing:-2px">月报表 <span style="font-size:24.7px;word-spacing:0">(Year 2024)</span></span></div>
<div class="reload"><span class="t">Reload</span></div>
<svg class="ic" style="left:2025.00px;top:54.20px;" width="24.00" height="24.00" viewBox="0 -1408 1536 1536"><path fill="#fff" transform="scale(1,-1)" d="M1511 480q0 -5 -1 -7q-64 -268 -268 -434.5t-478 -166.5q-146 0 -282.5 55t-243.5 157l-129 -129q-19 -19 -45 -19t-45 19t-19 45v448q0 26 19 45t45 19h448q26 0 45 -19t19 -45t-19 -45l-137 -137q71 -66 161 -102t187 -36q134 0 250 65t186 179q11 17 53 117 q8 23 30 23h192q13 0 22.5 -9.5t9.5 -22.5zM1536 1280v-448q0 -26 -19 -45t-45 -19h-448q-26 0 -45 19t-19 45t19 45l138 138q-148 137 -349 137q-134 0 -250 -65t-186 -179q-11 -17 -53 -117q-8 -23 -30 -23h-199q-13 0 -22.5 9.5t-9.5 22.5v7q65 268 270 434.5t480 166.5 q146 0 284 -55.5t245 -156.5l130 129q19 19 45 19t45 -19t19 -45z"/></svg>
</div>
<div id="foot"><div class="l"><b style="font-size:26px">adminsp, powered by </b><span>Best Support System</span><i style="font-style:normal;font-weight:400"> .</i></div><div class="r"><b>Version</b> 4.1.4</div></div>
</div>
<script>(function(){var r=window.innerWidth/2736;if(r>0&&Math.abs(r-1)>0.005){document.documentElement.style.zoom=r;}})();</script>
</body>
</html>
